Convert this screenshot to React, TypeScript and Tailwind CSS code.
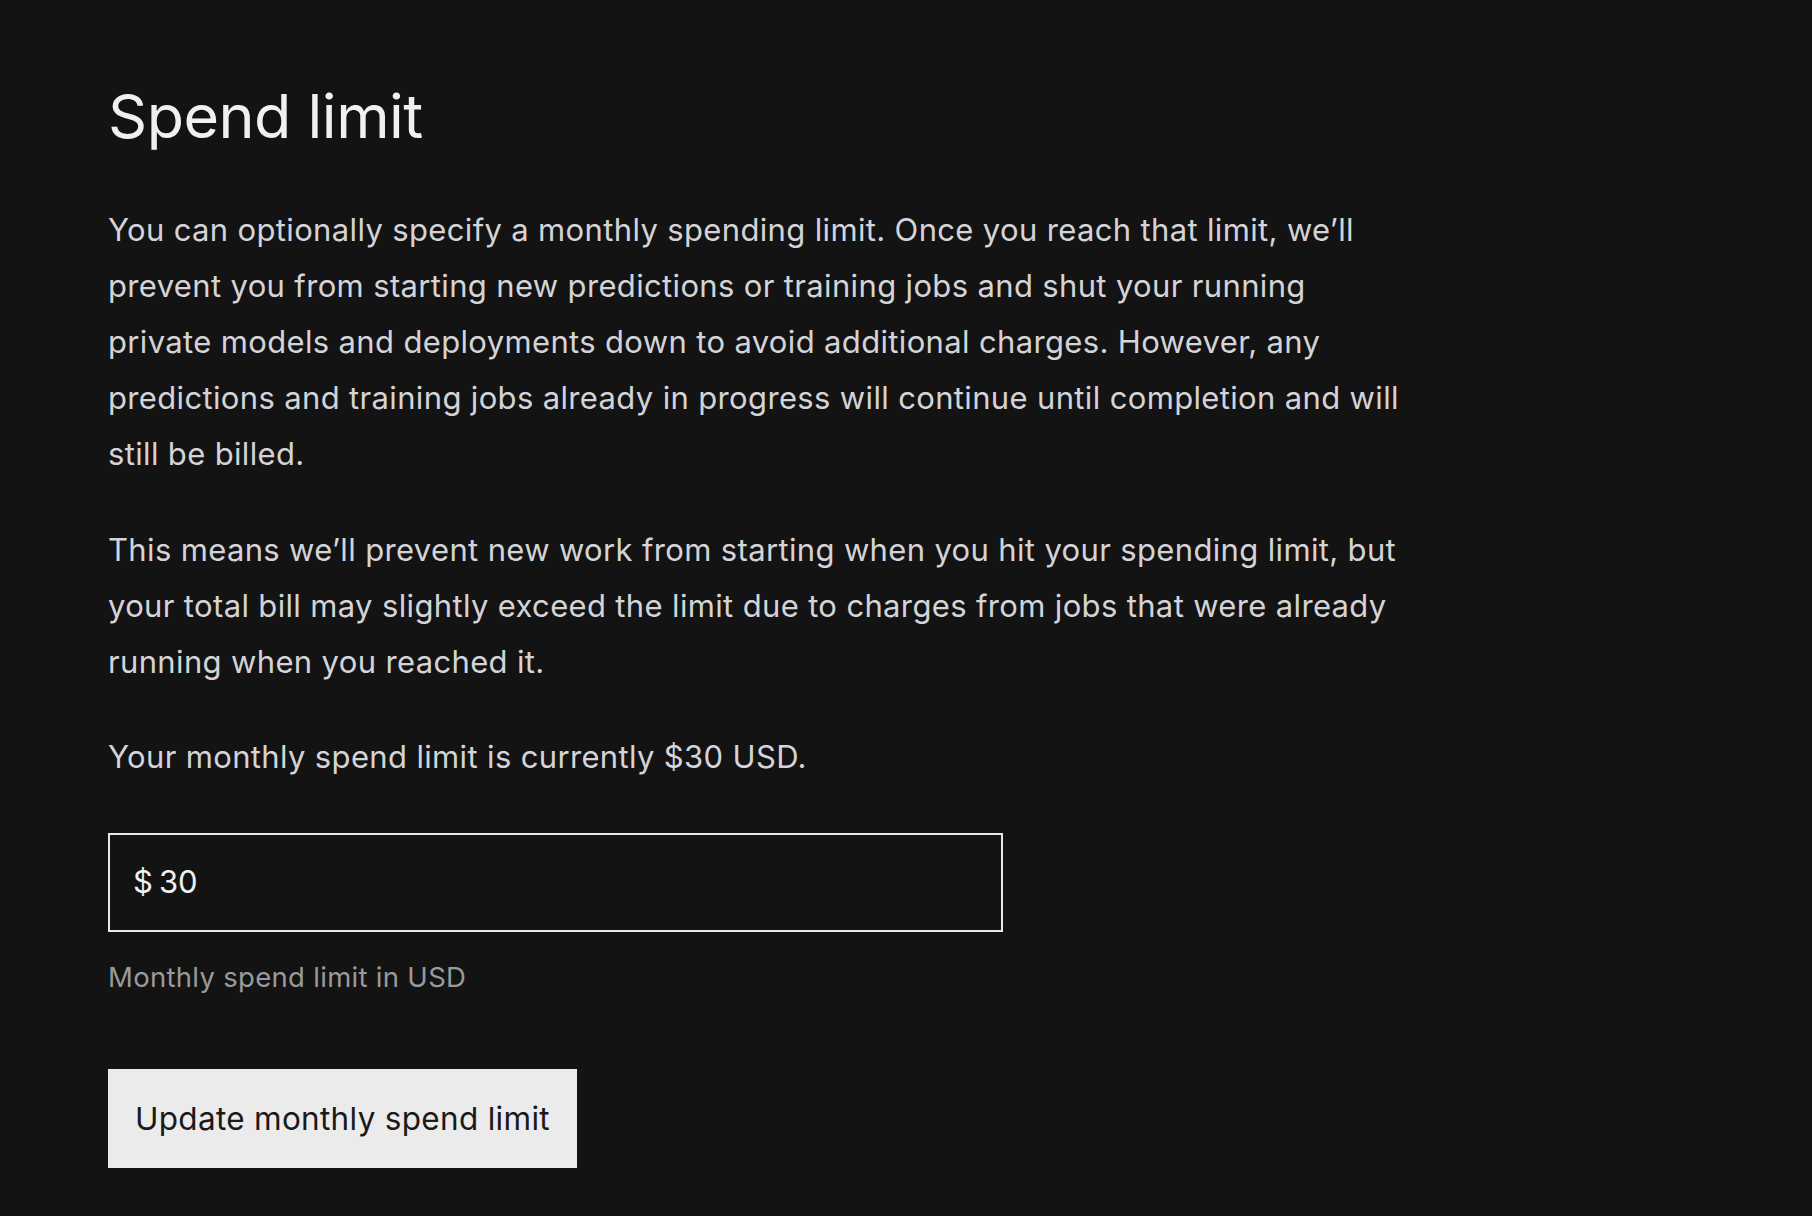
export default function App() {
  return (
    <div
      className="min-h-screen bg-[#131313] pl-[108px] pt-[86px] pb-10"
      style={{ fontFamily: 'Inter, "Liberation Sans", sans-serif' }}
    >
      <h1 className="text-[61px] leading-[60px] text-[#f0f0f0] tracking-[-0.5px]">Spend limit</h1>

      <div className="mt-[56px] w-[1305px] text-[31px] leading-[56px] text-[#d4d4d8] tracking-[0.35px]">
        <p>
          You can optionally specify a monthly spending limit. Once you reach that limit, we’ll prevent you from
          starting new predictions or training jobs and shut your running private models and deployments down to
          avoid additional charges. However, any predictions and training jobs already in progress will continue
          until completion and will still be billed.
        </p>
        <p className="mt-[40px]">
          This means we’ll prevent new work from starting when you hit your spending limit, but your total bill may
          slightly exceed the limit due to charges from jobs that were already running when you reached it.
        </p>
        <p className="mt-[39px]">Your monthly spend limit is currently $30 USD.</p>
      </div>

      <div className="mt-[48px] flex h-[99px] w-[895px] items-center border-2 border-[#e8e8e8] px-[23px] text-[31px] text-[#f0f0f0]">
        <span>$</span>
        <input
          defaultValue="30"
          className="ml-[6px] w-full bg-transparent text-[31px] text-[#f0f0f0] outline-none"
        />
      </div>
      <p className="mt-[25px] text-[27.5px] leading-[40px] text-[#9a9a9a] tracking-[0.3px]">Monthly spend limit in USD</p>

      <button className="mt-[72px] h-[99px] bg-[#ebebeb] px-[27px] text-[31.5px] text-[#1a1a1a] tracking-[0.3px]">
        Update monthly spend limit
      </button>
    </div>
  );
}
